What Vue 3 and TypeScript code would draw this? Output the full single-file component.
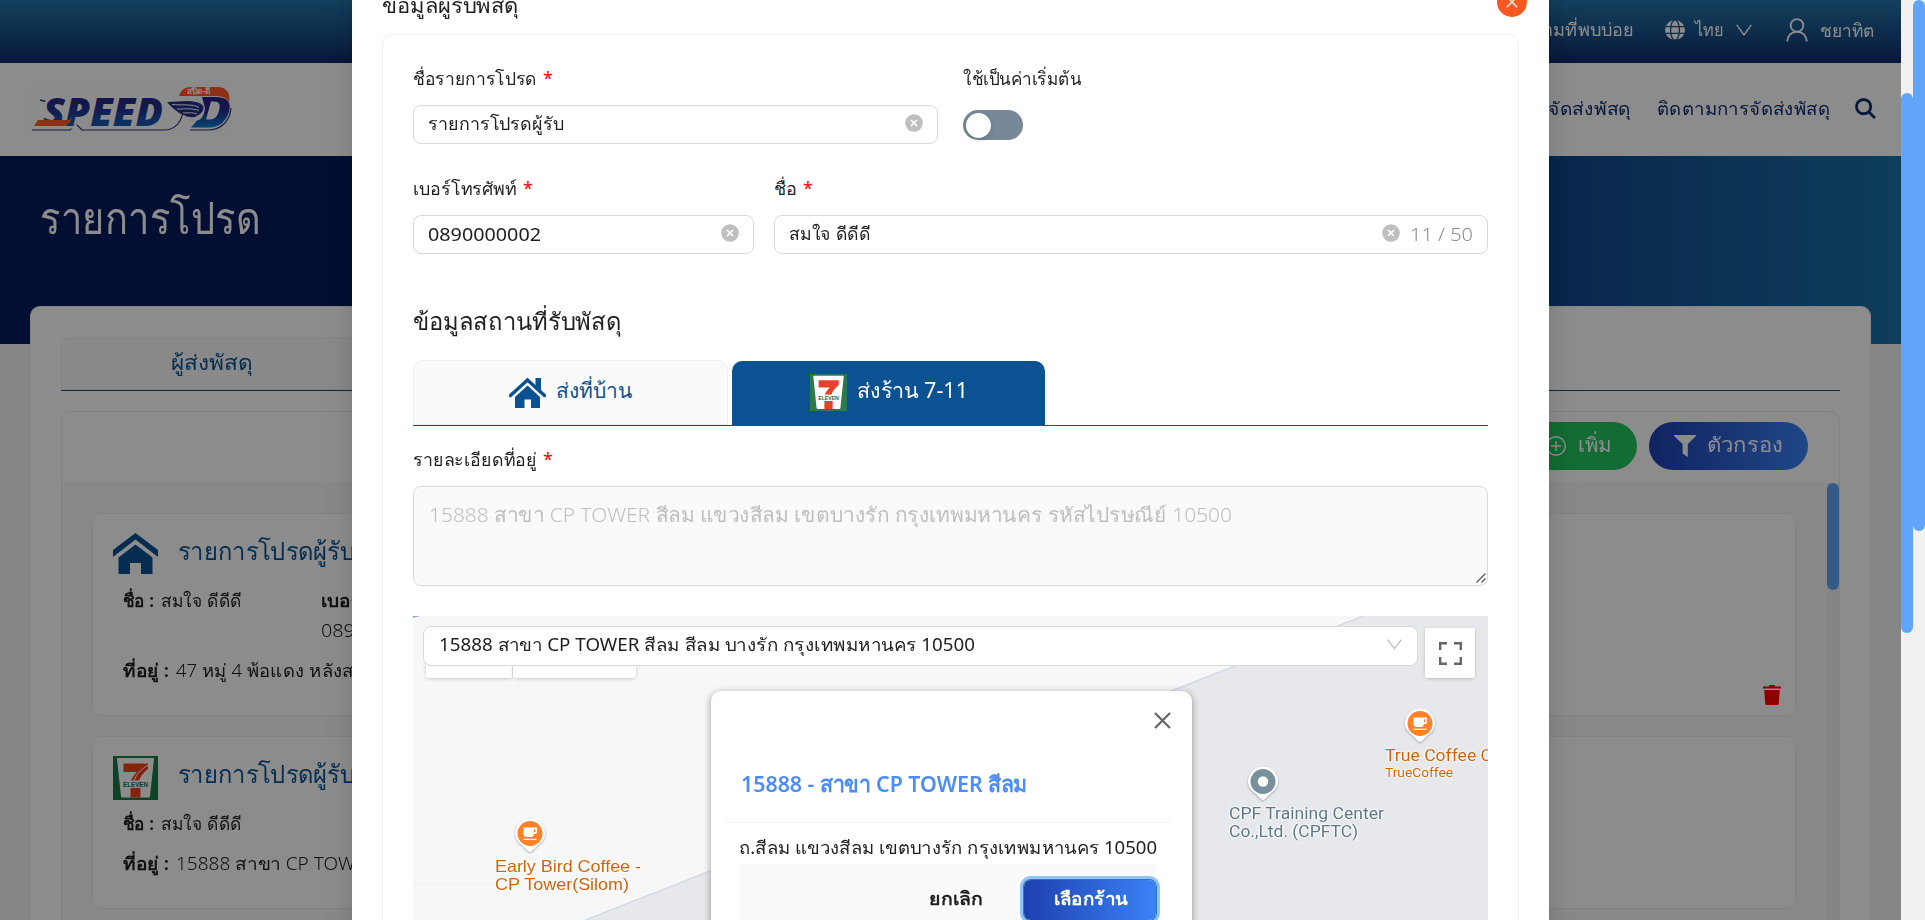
<script setup lang="ts">
import type { Directive } from 'vue'

// Condenses or widens a label so that it takes exactly the given width.
const vFit: Directive<HTMLElement, number> = {
  mounted(el, binding) {
    const natural = el.getBoundingClientRect().width
    if (!natural) return
    el.style.width = `${binding.value}px`
    el.style.transform = `scaleX(${binding.value / natural})`
  },
}

interface Favourite {
  kind: 'home' | 'store'
  title: string
  name: string
  phone?: string
  address: string
  addressWidth: number
}

const favourites: Favourite[] = [
  { kind: 'home', title: 'รายการโปรดผู้รับ', name: 'สมใจ ดีดีดี', phone: '0890000001', address: '47 หมู่ 4 พ้อแดง หลังสวน', addressWidth: 200 },
  { kind: 'store', title: 'รายการโปรดผู้รับ', name: 'สมใจ ดีดีดี', address: '15888 สาขา CP TOWER', addressWidth: 201 },
]
</script>

<template>
  <div class="screen">
    <div class="page">
      <header class="topbar">
        <span v-fit="124" class="t faq">คำถามที่พบบ่อย</span>
        <svg class="globe" viewBox="0 0 20 20">
          <circle cx="10" cy="10" r="10" fill="#fff" />
          <g fill="none" stroke="#1d4f83" stroke-width="1.3">
            <ellipse cx="10" cy="10" rx="4.4" ry="10.2" />
            <path d="M0 6.6h20M0 13.4h20" />
          </g>
        </svg>
        <span v-fit="29" class="t thai">ไทย</span>
        <svg class="chev" viewBox="0 0 16 12"><path d="M.7.8 8 11 15.3.8" fill="none" stroke="#fff" stroke-width="1.4" /></svg>
        <svg class="user" viewBox="0 0 22 24">
          <g fill="none" stroke="#fff" stroke-width="1.9"><circle cx="11" cy="7.4" r="6.3" /><path d="M1.2 23.5c.3-6 4.300-9.800 9.800-9.800s9.500 3.800 9.800 9.800" /></g>
        </svg>
        <span v-fit="55" class="t member">ชยาทิต</span>
      </header>
      <nav class="navbar">
        <svg class="logo" viewBox="0 0 206 54">
          <defs>
            <linearGradient id="ink" x1="0" y1="0" x2="0" y2="1">
              <stop offset="0" stop-color="#2a1c86" /><stop offset=".45" stop-color="#24308f" /><stop offset="1" stop-color="#0b7ccb" />
            </linearGradient>
          </defs>
          <rect width="206" height="54" fill="#fdfdfd" />
          <path d="M6 48H44l6-6 6 6h82c12 0 18-9 20-22" fill="none" stroke="#35357c" stroke-width="1.200" />
          <path d="M164 48h18c14 0 22-10 23-22" fill="none" stroke="#35357c" stroke-width="1.200" />
          <path d="M14 18l8 2" stroke="#35357c" stroke-width="1.500" />
          <text x="17" y="44" textLength="120" lengthAdjust="spacingAndGlyphs" class="logo-text" stroke="#fff" stroke-width="5">SPEED</text>
          <text x="17" y="44" textLength="120" lengthAdjust="spacingAndGlyphs" class="logo-text" fill="url(#ink)">SPEED</text>
          <path d="M8 44l4-6h30c2 0 3-1 4-3-1 6-5 9-10 9z" fill="#ff5a1f" />
          <path d="M153 14c2-6 6-9 12-9h26c9 0 14 6 12 15-3-5-8-6-15-6z" fill="#ff5a1f" />
          <text x="161" y="12" textLength="23" lengthAdjust="spacingAndGlyphs" class="logo-tag">สปีด-ดี</text>
          <path d="M176 15h13c12 0 17 5 14 15-3 9-9 15.500-20 15.500h-18l6-7c4 0 7-5 8-12zM188 19.500h-3l-5 18h4c5 0 8-4 9-9 2-6 0-9-5-9z" fill="url(#ink)" fill-rule="evenodd" />
          <path d="M141 20c12 0 20-2 29 0 8 2 9 6 6 10-3 4-8 6-12 5-8-1-16-7-23-15z" fill="#24308f" />
          <path d="M146 22.500c10 1 20-1 27 3M151 27c8 0 15-1 22 1.500M157 31c6 0 9-1 14 1" fill="none" stroke="#fff" stroke-width="1" />
        </svg>
        <span class="grow" />
        <span v-fit="83" class="t nav-text">จัดส่งพัสดุ</span>
        <span v-fit="173" class="t nav-text second">ติดตามการจัดส่งพัสดุ</span>
        <svg class="search" viewBox="0 0 20 20"><g fill="none" stroke="#0f2c6d" stroke-width="2.700"><circle cx="8.200" cy="8.200" r="6.800" /><path d="M13 13l6 6" /></g></svg>
      </nav>
      <section class="banner">
        <h1 v-fit="221" class="t">รายการโปรด</h1>
      </section>
      <main class="board">
        <div class="page-tabs">
          <div class="page-tab"><span v-fit="82" class="t">ผู้ส่งพัสดุ</span></div>
        </div>
        <section class="panel">
          <div class="tools">
            <button class="pill green">
              <svg viewBox="0 0 20 20" width="20" height="20"><g fill="none" stroke="#fff" stroke-width="1.400"><circle cx="10" cy="10" r="9.300" /><path d="M10 5v10M5 10h10" /></g></svg>
              <span v-fit="34" class="t">เพิ่ม</span>
            </button>
            <button class="pill blue">
              <svg viewBox="0 0 22 22" width="22" height="22"><path d="M0 0h22v1l-8.200 8v13L8.600 18.500V9L0 1z" fill="#fff" /></svg>
              <span v-fit="76" class="t">ตัวกรอง</span>
            </button>
          </div>
          <div class="list">
            <div class="cards">
              <article v-for="(f, i) in favourites" :key="i" class="fav">
                <div class="fav-head">
                  <svg v-if="f.kind === 'home'" class="fav-icon" viewBox="0 0 45 44">
                    <path d="M22.500 0 45 17v7L22.500 6.500 0 24v-7z" fill="#0a5291" />
                    <path d="M22.500 11.500 39.500 24.500V41H28V30H17v11H5.500V24.500z" fill="#0a5291" />
                  </svg>
                  <svg v-else class="fav-icon" viewBox="0 0 45 44">
                    <rect width="45" height="44" fill="#1c7a48" />
                    <path d="M4 3q0-1 1-1h35q1 0 1 1l-4 37q0 1.500-1.500 1.500h-26Q8 41.500 8 40z" fill="#fff" />
                    <path d="M10.500 7.500H35V13c-5 4-8 8-9 12h-8c1-4 4-7 6-9H10.500zM17.500 32h10v9.500h-10z" fill="#f0431d" />
                    <path d="M21 25c2-6 6-11 14-16" stroke="#fff" fill="none" />
                    <rect x="9" y="24.500" width="27" height="7" fill="#fff" />
                    <text x="10" y="30.500" textLength="25" lengthAdjust="spacingAndGlyphs" class="eleven">ELEVEN</text>
                  </svg>
                  <span v-fit="177" class="t fav-title">{{ f.title }}</span>
                </div>
                <div class="fav-row">
                  <div class="fav-name"><b v-fit="31" class="t">ชื่อ :</b><span v-fit="81" class="t">{{ f.name }}</span></div>
                  <div v-if="f.phone" class="fav-phone"><b v-fit="84" class="t">เบอร์โทร :</b><span v-fit="113" class="t">{{ f.phone }}</span></div>
                </div>
                <div class="fav-row address">
                  <b v-fit="46" class="t">ที่อยู่ :</b><span v-fit="f.addressWidth" class="t">{{ f.address }}</span>
                </div>
                <svg class="trash" viewBox="0 0 18 20"><path d="M0 1.500h6l.5-1.500h5l.5 1.500h6v2H0zM1.200 5h15.600l-1 13.500q-.1 1.500-1.600 1.500H3.800q-1.500 0-1.600-1.500z" fill="#f00" /></svg>
              </article>
            </div>
            <div class="rail"><i /></div>
          </div>
        </section>
      </main>
    </div>
    <div class="mask" />

    <section class="modal">
      <div class="modal-head"><span v-fit="137" class="t">ข้อมูลผู้รับพัสดุ</span></div>
      <button class="modal-close"><svg viewBox="0 0 12 12" width="12" height="12"><path d="M.8.8l10.400 10.400M11.200.8.8 11.200" stroke="#fff" stroke-width="1.300" /></svg></button>
      <div class="form">
        <div class="row">
          <div class="field w525">
            <label><span v-fit="124" class="t">ชื่อรายการโปรด</span><em>*</em></label>
            <div class="input"><span v-fit="136" class="t">รายการโปรดผู้รับ</span><i class="clear"><svg viewBox="0 0 18 18"><circle cx="9" cy="9" r="8.800" fill="#bfbfbf" /><path d="M6 6l6 6M12 6l-6 6" stroke="#fff" stroke-width="1.700" /></svg></i></div>
          </div>
          <div class="field toggle-field">
            <label><span v-fit="118" class="t">ใช้เป็นค่าเริ่มต้น</span></label>
            <span class="switch"><i /></span>
          </div>
        </div>
        <div class="row second">
          <div class="field w341">
            <label><span v-fit="104" class="t">เบอร์โทรศัพท์</span><em>*</em></label>
            <div class="input"><span v-fit="113" class="t">0890000002</span><i class="clear"><svg viewBox="0 0 18 18"><circle cx="9" cy="9" r="8.800" fill="#bfbfbf" /><path d="M6 6l6 6M12 6l-6 6" stroke="#fff" stroke-width="1.700" /></svg></i></div>
          </div>
          <div class="field fill">
            <label><span v-fit="23" class="t">ชื่อ</span><em>*</em></label>
            <div class="input"><span v-fit="82" class="t">สมใจ ดีดีดี</span><i class="clear"><svg viewBox="0 0 18 18"><circle cx="9" cy="9" r="8.800" fill="#bfbfbf" /><path d="M6 6l6 6M12 6l-6 6" stroke="#fff" stroke-width="1.700" /></svg></i><span v-fit="63" class="t count">11 / 50</span></div>
          </div>
        </div>
        <h2><span v-fit="209" class="t">ข้อมูลสถานที่รับพัสดุ</span></h2>
        <div class="tabs">
          <div class="tab">
            <svg viewBox="0 0 37 30" width="37" height="30">
              <path d="M1.500 17.500 18.500 2 35.500 17.500" fill="none" stroke="#0a5291" stroke-width="3.400" stroke-linecap="round" />
              <path d="M26.500 0h5.500v13l-5.500-5zM18.500 7.500 31 19v11H22v-8.500h-6.500V30H6V19z" fill="#0a5291" />
            </svg>
            <span v-fit="76" class="t">ส่งที่บ้าน</span>
          </div>
          <div class="tab active">
            <svg viewBox="0 0 45 44" width="37" height="37" preserveAspectRatio="none">
              <rect width="45" height="44" fill="#2b7a4b" />
              <path d="M4 3q0-1 1-1h35q1 0 1 1l-4 37q0 1.500-1.500 1.500h-26Q8 41.500 8 40z" fill="#fff" />
              <path d="M10.500 7.500H35V13c-5 4-8 8-9 12h-8c1-4 4-7 6-9H10.500zM17.500 32h10v9.500h-10z" fill="#e8402a" />
              <rect x="9" y="24.500" width="27" height="7" fill="#fff" />
              <text x="10" y="30.500" textLength="25" lengthAdjust="spacingAndGlyphs" class="eleven">ELEVEN</text>
            </svg>
            <span v-fit="111" class="t">ส่งร้าน 7-11</span>
          </div>
        </div>
        <label class="addr-label"><span v-fit="124" class="t">รายละเอียดที่อยู่</span><em>*</em></label>
        <div class="textarea">
          <span v-fit="803" class="t">15888 สาขา CP TOWER สีลม แขวงสีลม เขตบางรัก กรุงเทพมหานคร รหัสไปรษณีย์ 10500</span>
          <svg class="grip" viewBox="0 0 10 10"><path d="M.5 9.500l9-9M5.500 9.500l4-4" stroke="#555" stroke-width="1.300" /></svg>
        </div>
        <div class="map">
          <svg class="ground" viewBox="0 0 1075 304">
            <path d="M950 0H1075V304H172z" fill="#e7e8ec" />
            <path d="M950 0 172 304" stroke="#d3d6e6" stroke-width="1.300" />
            <path d="M0 268.500h180" stroke="#f2f2f3" />
            <path d="M0 0h7L0 2z" fill="#8fa9cc" />
          </svg>
          <div class="poi early">
            <svg class="pin" viewBox="0 0 34 38"><path d="M17 1.500a15 15 0 0 1 15 15c0 6-4 9-8.500 13L19 34q-2 2-4 0l-4.500-4.500C6 25.500 2 22.500 2 16.500a15 15 0 0 1 15-15z" fill="#fff" class="drop" /><circle cx="17" cy="16.500" r="12.500" fill="#ff8227" /><path d="M10.500 10.500h13.500v4.500q0 2-2 2h-1q-.6 3-3 3h-4q-3.500 0-3.500-3.500zM21 12.200v3h1.300v-3z" fill="#fff" fill-rule="evenodd" /><path d="M10.500 22.300h13" stroke="#fff" stroke-width="1.200" /></svg>
            <span v-fit="146" class="t">Early Bird Coffee -</span>
            <span v-fit="134" class="t">CP Tower(Silom)</span>
          </div>
          <div class="poi cpf">
            <svg class="pin" viewBox="0 0 34 38"><path d="M17 1.500a15 15 0 0 1 15 15c0 6-4 9-8.500 13L19 34q-2 2-4 0l-4.500-4.500C6 25.500 2 22.500 2 16.500a15 15 0 0 1 15-15z" fill="#fff" class="drop" /><circle cx="17" cy="16.500" r="12.500" fill="#78909c" /><circle cx="17" cy="16.500" r="5.200" fill="#fff" /></svg>
            <span v-fit="155" class="t">CPF Training Center</span>
            <span v-fit="129" class="t">Co.,Ltd. (CPFTC)</span>
          </div>
          <div class="poi cafe">
            <svg class="pin" viewBox="0 0 34 38"><path d="M17 1.500a15 15 0 0 1 15 15c0 6-4 9-8.500 13L19 34q-2 2-4 0l-4.500-4.500C6 25.500 2 22.500 2 16.500a15 15 0 0 1 15-15z" fill="#fff" class="drop" /><circle cx="17" cy="16.500" r="12.500" fill="#ff8227" /><path d="M10.500 10.500h13.500v4.500q0 2-2 2h-1q-.6 3-3 3h-4q-3.500 0-3.500-3.500zM21 12.200v3h1.300v-3z" fill="#fff" fill-rule="evenodd" /><path d="M10.500 22.300h13" stroke="#fff" stroke-width="1.200" /></svg>
            <span v-fit="107" class="t">True Coffee C</span>
            <span v-fit="68" class="t small">TrueCoffee</span>
          </div>
          <div class="map-types"><i class="a" /><i class="b" /></div>
          <div class="select">
            <span v-fit="536" class="t">15888 สาขา CP TOWER สีลม สีลม บางรัก กรุงเทพมหานคร 10500</span>
            <svg viewBox="0 0 15 11" width="15" height="11"><path d="M.7.7 7.500 9.700 14.300.7" fill="none" stroke="#bfbfbf" stroke-width="1.400" /></svg>
          </div>
          <button class="full"><svg viewBox="0 0 23 23" width="23" height="23"><path d="M1.200 8V1.200H8M15 1.200h6.800V8M21.800 15v6.800H15M8 21.800H1.200V15" fill="none" stroke="#666" stroke-width="2.400" /></svg></button>
          <div class="info">
            <svg class="info-x" viewBox="0 0 17 17"><path d="M1 1l15 15M16 1 1 16" stroke="#666" stroke-width="2.200" /></svg>
            <div class="info-title"><span v-fit="287" class="t">15888 - สาขา CP TOWER สีลม</span></div>
            <div class="info-body">
              <span v-fit="418" class="t">ถ.สีลม แขวงสีลม เขตบางรัก กรุงเทพมหานคร 10500</span>
              <div class="info-actions">
                <span v-fit="54" class="t cancel">ยกเลิก</span>
                <button class="choose"><span v-fit="74" class="t">เลือกร้าน</span></button>
              </div>
            </div>
          </div>
        </div>
      </div>
    </section>
    <div class="bars">
      <div class="bar"><i class="modal-thumb" /></div>
      <div class="bar"><i class="page-thumb" /></div>
    </div>
  </div>
</template>

<style>
html, body { margin: 0; overflow: hidden; }
</style>

<style scoped>
.screen, .screen * { box-sizing: border-box; }
.screen { position: relative; width: 1925px; height: 920px; overflow: hidden; background: #f5f5f5; font-family: "Noto Sans", "Open Sans", "Liberation Sans", sans-serif; font-size: 18px; font-weight: 300; color: #1f1f1f; }
.screen button { border: 0; padding: 0; font-family: inherit; font-weight: inherit; }
.t { display: inline-block; flex: none; white-space: nowrap; transform-origin: 0 50%; }
svg { display: block; flex: none; }
i { font-style: normal; }
.page { width: 1901px; height: 920px; overflow: hidden; }
.topbar { height: 63px; display: flex; align-items: center; justify-content: flex-end; padding: 0 26px 4px 0; background: linear-gradient(#2575a9, #1b578f 45%, #112a68); color: #fff; }
.globe { width: 20px; height: 20px; margin: 0 10px 0 31px; }
.chev { width: 16px; height: 12px; margin-left: 12px; }
.user { width: 22px; height: 24px; margin: 0 12px 0 34px; }
.member { padding-top: 2px; }
.navbar { height: 93px; display: flex; align-items: center; padding: 0 25px 2px 26px; background: #fff; color: #0f2c6d; }
.logo { width: 206px; height: 54px; }
.logo-text { font: italic 800 38px "Open Sans", "Noto Sans", sans-serif; }
.logo-tag { font: 700 8px "Noto Sans", sans-serif; fill: #fff; }
.grow { flex: 1; }
.nav-text { margin-top: -1px; }
.nav-text.second { margin-left: 26px; }
.search { width: 21px; height: 21px; margin-left: 25px; }
.banner { height: 188px; padding: 27px 40px; background: linear-gradient(90deg, #051c5e 30%, #10478a 82%, #1c70a8); }
.banner h1 { margin: 0; color: #fff; font-size: 44px; font-weight: 400; line-height: 68px; }
.board { position: relative; margin: -38px 30px 0; height: 660px; padding: 30px; background: #fff; border: 1px solid #f0f0f0; border-radius: 10px; }
.page-tabs { height: 54px; border-bottom: 1px solid #0b5291; display: flex; }
.page-tab { width: 302px; padding-bottom: 3px; display: flex; align-items: center; justify-content: center; background: #fafafa; border: 1px solid #f0f0f0; border-radius: 10px 10px 0 0; font-size: 21px; color: #0a5291; }
.panel { margin-top: 20px; height: 560px; border: 1px solid #ededed; border-radius: 10px; }
.tools { height: 71px; display: flex; justify-content: flex-end; align-items: flex-start; gap: 12px; padding: 10px 31px 0 0; }
.pill { height: 48px; border-radius: 24px; display: flex; align-items: center; color: #fff; font-size: 20px; }
.pill .t { padding-bottom: 3px; }
.green { width: 115px; padding-left: 24px !important; gap: 11px; background: #22c55e; }
.blue { width: 159px; padding-left: 25px !important; gap: 7px; background: linear-gradient(90deg, #1e40af, #3b82f6); }
.list { display: flex; background: #f8f8f8; height: 480px; }
.cards { flex: 1; padding: 30px 31px 0 30px; }
.rail { width: 12px; background: #f1f1f1; }
.rail i { display: block; height: 107px; border-radius: 6px; background: #60a5fa; }
.fav { position: relative; overflow: hidden; background: #fff; border: 1px solid #ededed; border-radius: 10px; margin-bottom: 20px; padding: 18px 20px 30px; }
.fav-head { display: flex; align-items: center; height: 45px; gap: 20px; }
.fav-icon { width: 45px; height: 44px; }
.fav-title { font-size: 25px; font-weight: 400; color: #0a5291; padding-bottom: 7px; }
.fav-row { display: flex; padding-left: 10px; margin-top: 8px; line-height: 30px; }
.fav-row b { font-weight: 600; margin-right: 7px; }
.fav-name { width: 198px; display: flex; }
.fav-phone { display: flex; flex-direction: column; align-items: flex-start; }
.address { margin-top: 10px; }
.trash { position: absolute; right: 14px; bottom: 10px; width: 18px; height: 20px; }
.fav + .fav .trash { bottom: -21px; }
.eleven { font: 700 7px "Liberation Sans", sans-serif; fill: #136b3e; }
.mask { position: absolute; inset: 0 24px 0 0; background: rgba(0, 0, 0, .45); }

.modal { position: absolute; left: 352px; top: -40px; width: 1197px; height: 1000px; padding: 0 30px; background: #fff; box-shadow: 0 6px 16px rgba(0, 0, 0, .08), 0 3px 6px -4px rgba(0, 0, 0, .12), 0 9px 28px 8px rgba(0, 0, 0, .05); }
.modal-head { height: 74px; padding: 16px 0 0; line-height: 59px; font-size: 21px; font-weight: 400; }
.modal-close { position: absolute; right: 22px; top: 27px; width: 30px; height: 30px; border-radius: 50%; background: #f6591f; display: grid; place-items: center; }
.form { height: 960px; border: 1px solid #f0f0f0; border-radius: 10px; padding: 30px 30px 0; font-weight: 400; }
.row { display: flex; }
.row.second { margin-top: 31px; gap: 20px; }
label { display: flex; height: 28px; line-height: 27px; margin-bottom: 12px; }
label em { font-style: normal; color: #f00; margin-left: 6px; }
.w525 { width: 525px; }
.w341 { width: 341px; }
.fill { flex: 1; }
.toggle-field { margin-left: 25px; }
.input { height: 39px; display: flex; align-items: center; padding: 0 14px 2px; border: 1px solid #d9d9d9; border-radius: 8px; }
.clear { width: 18px; height: 18px; margin: -1px 0 0 auto; }
.count { margin-left: 10px; color: #8c8c8c; font-weight: 300; }
.switch { display: block; margin-top: 17px; width: 60px; height: 30px; border-radius: 15px; background: #778899; padding: 2.5px; }
.switch i { display: block; width: 25px; height: 25px; border-radius: 50%; background: #fff; box-shadow: 0 2px 4px rgba(0, 35, 11, .2); }
h2 { margin: 47px 0 19px; height: 40px; line-height: 39px; font-size: 24px; font-weight: 400; }
.tabs { height: 66px; display: flex; gap: 4px; border-bottom: 1px solid #0b5291; }
.tab { width: 315px; display: flex; align-items: center; justify-content: center; gap: 10px; background: #fafafa; border: 1px solid #f0f0f0; border-radius: 10px 10px 0 0; font-size: 21px; color: #0a5291; }
.tab.active { width: 313px; margin-top: 1px; padding-bottom: 1px; background: #0a5291; border: 0; color: #fff; }
.tab .t { padding-bottom: 4px; }
.addr-label { margin-top: 20px; }
.textarea { position: relative; height: 100px; padding: 12px 15px; border: 1px solid #d9d9d9; border-radius: 8px; background: #f9fafc; color: #bfbfbf; font-size: 20px; font-weight: 300; line-height: 32px; }
.grip { position: absolute; right: 1px; bottom: 2px; width: 10px; height: 10px; }
.map { position: relative; margin-top: 30px; height: 304px; background: #f7f7f7; overflow: hidden; }
.ground { width: 1075px; height: 304px; }
.select { position: absolute; left: 10px; top: 10px; width: 995px; height: 40px; display: flex; align-items: center; justify-content: space-between; padding: 0 15px 3px; background: #fff; border: 1px solid #d9d9d9; border-radius: 8px; }
.select .t { margin-top: -1px; }
.full { position: absolute; left: 1012px; top: 12px; width: 50px; height: 50px; border-radius: 2px; background: #fff; display: grid; place-items: center; box-shadow: 0 1px 4px -1px rgba(0, 0, 0, .3); }
.map-types { position: absolute; left: 13px; top: 22px; display: flex; gap: 1px; }
.map-types i { height: 40px; background: #fff; border-radius: 2px; box-shadow: 0 1px 4px -1px rgba(0, 0, 0, .3); }
.a { width: 86px; }
.b { width: 123px; }
.poi { position: absolute; display: flex; flex-direction: column; align-items: flex-start; font: 400 16.5px/17.5px Roboto, sans-serif; color: #d56208; text-shadow: 0 0 2px #fff, 0 0 2px #fff, 1px 0 1px #fff, -1px 0 1px #fff; }
.pin { width: 34px; height: 38px; filter: drop-shadow(0 1px 1px rgba(60, 80, 110, .45)); }
.early { left: 82px; top: 201px; font-family: "Liberation Sans", sans-serif; }
.early .pin { margin-left: 18px; margin-bottom: 3px; }
.cpf { left: 815.5px; top: 149px; color: #5c7886; }
.cpf .pin { margin-left: 17.5px; margin-bottom: 2px; }
.cafe { left: 972px; top: 91px; }
.cafe .pin { margin-left: 17.5px; margin-bottom: 2px; }
.small { font-size: 13.5px; line-height: 14px; }
.info { position: absolute; left: 298px; top: 75px; width: 481px; height: 260px; padding-top: 60px; background: #fff; border-radius: 10px; box-shadow: 0 2px 7px 1px rgba(0, 0, 0, .3); }
.info-x { position: absolute; right: 21px; top: 21px; width: 17px; height: 17px; }
.info-title { height: 72px; margin: 0 22px 0 15px; padding-left: 15px; border-bottom: 1px solid #f0f0f0; font-size: 22px; font-weight: 600; line-height: 64px; color: #4b8df8; }
.info-body { padding: 9px 35px 0 28px; line-height: 30px; }
.info-actions { height: 80px; margin-top: 2px; display: flex; justify-content: flex-end; align-items: flex-start; padding: 16px 1px 0 0; background: #fafafa; font-weight: 600; }
.cancel { margin: 3px 41px 0 0; }
.choose { width: 132px; height: 40px; border-radius: 7px; background: linear-gradient(90deg, #1e40af, #3b82f6); color: #fff; font-size: 18px; box-shadow: 0 0 0 1px #2a78b8, 0 0 0 4px #91c3f9; padding: 0 3px 3px 0 !important; }
.bars { position: absolute; right: 0; top: 0; display: flex; height: 920px; }
.bar { width: 12px; background: #f1f1f1; }
.bar i { display: block; border-radius: 6px; background: #60a5fa; }
.modal-thumb { margin-top: 93px; height: 540px; }
.page-thumb { height: 531px; }
</style>
